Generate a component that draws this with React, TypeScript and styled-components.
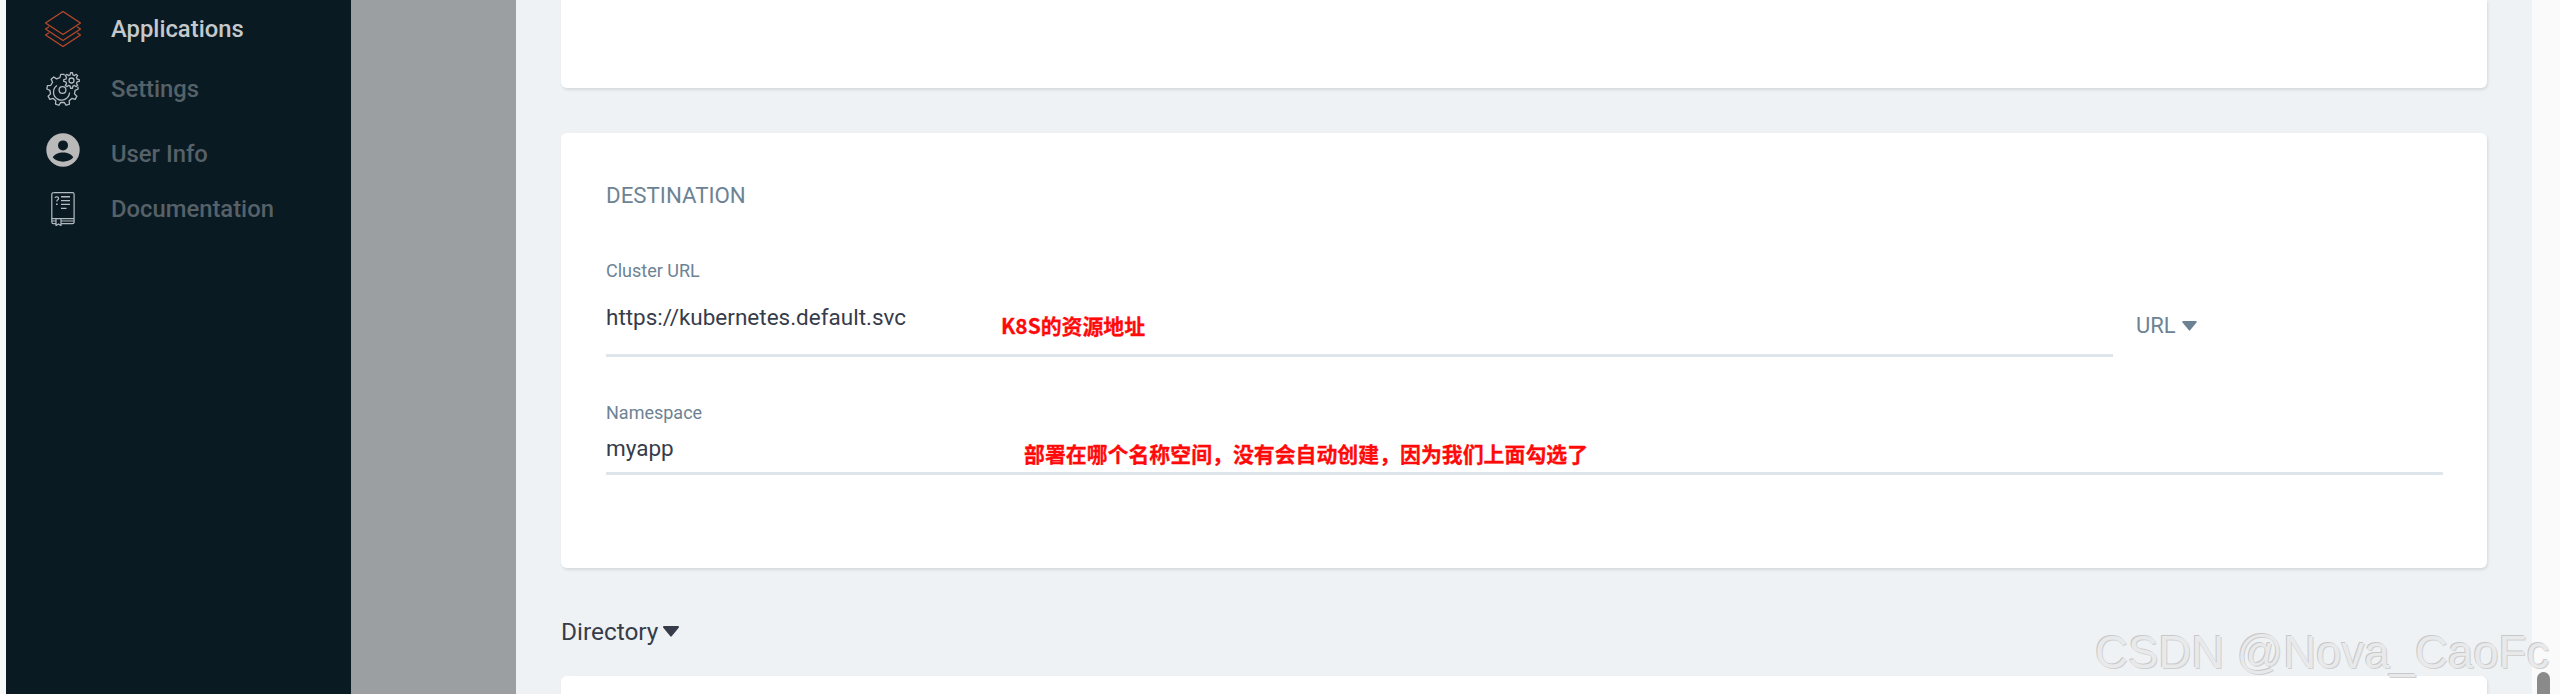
import React from "react";
import styled, { createGlobalStyle } from "styled-components";

const Global = createGlobalStyle`
  html, body { margin: 0; padding: 0; background: #f8f8f8; }
  * { box-sizing: border-box; }
`;

const Page = styled.div`
  position: relative;
  display: flex;
  width: 2560px;
  height: 694px;
  overflow: hidden;
  font-family: Roboto, "Noto Sans CJK SC", sans-serif;
  background: #f8f8f8;
`;

const LeftEdge = styled.div`
  flex: 0 0 6px;
  background: #f7f8f8;
`;

const Sidebar = styled.nav`
  flex: 0 0 345px;
  display: flex;
  flex-direction: column;
  padding-left: 39px;
  background: #0a1a23;
`;

const NavItem = styled.div<{ $height: number }>`
  display: flex;
  align-items: center;
  gap: 30px;
  height: ${(p) => p.$height}px;
`;

const NavIcon = styled.div<{ $lift?: number }>`
  flex: 0 0 36px;
  display: flex;
  align-items: center;
  justify-content: center;
  height: 36px;
  transform: translateY(${(p) => -(p.$lift ?? 0)}px);
`;

const NavLabel = styled.span<{ $active?: boolean }>`
  font-size: 23.8px;
  font-weight: 500;
  line-height: 28px;
  color: ${(p) => (p.$active ? "#c4c9cc" : "#566168")};
`;

const Backdrop = styled.div`
  flex: 0 0 165px;
  background: #9b9fa2;
`;

const Main = styled.main`
  flex: 0 0 2016px;
  display: flex;
  flex-direction: column;
  padding: 0 45px;
  overflow: hidden;
  background: #eff2f5;
`;

const Card = styled.section<{ $height: number; $mt?: number }>`
  position: relative;
  flex: 0 0 ${(p) => p.$height}px;
  margin-top: ${(p) => p.$mt ?? 0}px;
  background: #ffffff;
  border-radius: 6px;
  box-shadow: 1px 2px 3px rgba(0, 0, 0, 0.1);
`;

const TopCard = styled(Card)`
  border-radius: 0 0 6px 6px;
`;

const DestinationCard = styled(Card)`
  padding: 50px 44px 0 45px;
`;

const Title = styled.h3`
  margin: 0 0 54px;
  font-size: 22.3px;
  font-weight: 400;
  line-height: 24px;
  color: #6d8394;
`;

const FieldRow = styled.div`
  display: flex;
  align-items: flex-end;
`;

const Field = styled.div<{ $width?: number }>`
  position: relative;
  flex: ${(p) => (p.$width ? `0 0 ${p.$width}px` : "1 1 auto")};
`;

const Label = styled.div`
  font-size: 18px;
  line-height: 20px;
  color: #6d8394;
`;

const Value = styled.div<{ $top: number; $bottom: number }>`
  padding: ${(p) => p.$top}px 0 ${(p) => p.$bottom}px;
  border-bottom: 3px solid #dee6eb;
  font-size: 22.5px;
  line-height: 24px;
  color: #363c4a;
`;

const NamespaceField = styled(Field)`
  margin-top: 46px;
`;

const TypeSwitch = styled.div`
  display: flex;
  align-items: center;
  gap: 6px;
  margin: 0 0 19px 23px;
  font-size: 22px;
  line-height: 24px;
  color: #6d8394;
`;

const Caret = styled.svg`
  flex: none;
  display: block;
`;

const Note = styled.span<{ $left: number; $top: number }>`
  position: absolute;
  left: ${(p) => p.$left}px;
  top: ${(p) => p.$top}px;
  font-family: "Noto Sans CJK SC", sans-serif;
  font-size: 20.9px;
  font-weight: 700;
  line-height: 28px;
  color: #ff0a0a;
  white-space: nowrap;
  -webkit-text-stroke: 0.3px #ff0a0a;
`;

const ViewToggle = styled.div`
  flex: 0 0 108px;
  display: flex;
  align-items: center;
  gap: 5px;
  padding: 18px 0 0;
  font-size: 24.4px;
  color: #363c4a;
`;

const ScrollRail = styled.div`
  flex: 0 0 28px;
  padding: 672px 0 0 5px;
  background: #fafafa;
`;

const ScrollThumb = styled.div`
  width: 13px;
  height: 40px;
  border-radius: 7px 7px 0 0;
  background: #8a8a8a;
`;

const Watermark = styled.div`
  position: absolute;
  left: 2095px;
  top: 624px;
  font-family: "Liberation Sans", Arial, sans-serif;
  font-size: 45.6px;
  line-height: 58px;
  white-space: nowrap;
  color: #e8e9ea;
  text-shadow: -1px -1px 0 #c8c8c8, 1px 1px 0 #d0d0d0;
`;

const gearPath = (cx: number, cy: number, outer: number, inner: number, teeth: number) => {
  const pts: string[] = [];
  const step = (Math.PI * 2) / teeth;
  for (let i = 0; i < teeth; i++) {
    const a = i * step - Math.PI / 2;
    const at = (r: number, t: number) => {
      const ang = a + t * step;
      return `${(cx + r * Math.cos(ang)).toFixed(2)} ${(cy + r * Math.sin(ang)).toFixed(2)}`;
    };
    pts.push(at(inner, -0.3), at(outer, -0.16), at(outer, 0.16), at(inner, 0.3));
  }
  return `M${pts.join("L")}Z`;
};

const LayersIcon = () => (
  <svg width="36" height="36" viewBox="0 0 36 36" fill="none" stroke="#b9482a" strokeWidth="1.3" strokeLinejoin="round">
    <path d="M18 .5 35.5 12 18 23.5.5 12Z" />
    <path d="M4 15.8.5 18 18 29.5 35.5 18 32 15.8" />
    <path d="M4 21.8.5 24 18 35.5 35.5 24 32 21.8" />
  </svg>
);

const GearsIcon = () => (
  <svg width="34" height="34" viewBox="0 0 34 34" fill="none" stroke="#b4bbc0" strokeWidth="1.3" strokeLinejoin="round">
    <mask id="big-gear-cut">
      <rect width="34" height="34" fill="#fff" stroke="none" />
      <circle cx="25.5" cy="8.5" r="9" fill="#000" stroke="none" />
    </mask>
    <g mask="url(#big-gear-cut)">
      <path d={gearPath(16.5, 18, 15.7, 12.6, 9)} />
      <path d="M11 13.5a8 8 0 1 0 12.5 7" />
    </g>
    <circle cx="16.5" cy="18" r="3.4" />
    <path d={gearPath(25.5, 8.5, 7.8, 5.8, 8)} />
    <circle cx="25.5" cy="8.5" r="2.5" />
  </svg>
);

const UserIcon = () => (
  <svg width="34" height="34" viewBox="0 0 34 34">
    <circle cx="17" cy="17" r="16.7" fill="#b9b9b9" />
    <circle cx="17" cy="12.4" r="5" fill="#0a1a23" />
    <path d="M6.8 24.6c1.6-3.6 5.6-5.1 10.2-5.1s8.6 1.5 10.2 5.1c-2.3 2.8-5.9 4.1-10.2 4.1s-7.9-1.3-10.2-4.1Z" fill="#0a1a23" />
  </svg>
);

const BookIcon = () => (
  <svg width="24" height="34" viewBox="0 0 24 34" fill="none" stroke="#b4bbc0" strokeWidth="1.2" strokeLinejoin="round">
    <path d="M2.5.7h19c.8 0 1.6.8 1.6 1.6v28c0 .8-.8 1.4-1.6 1.4H10" />
    <path d="M5 31.7H2.5C1.5 31.7.8 31 .8 30V2.4C.8 1.4 1.5.7 2.5.7" />
    <path d="M.8 26.7h22.3M.9 29h4M10 29h13" />
    <path d="M5 27v6.6l2.5-1.7 2.5 1.7V27" />
    <path d="M4 6c.3-1.5 3.6-1.5 3.6.4 0 1.4-1.8 1.4-1.8 3" />
    <path d="M5.8 11.6v1.3" strokeWidth="1.6" />
    <path d="M10 4.8h9M10 8.6h9M10 12.4h9M10 16.4h5.5" strokeWidth="1.4" />
  </svg>
);

const DownCaret = ({ color, width, height }: { color: string; width: number; height: number }) => (
  <Caret width={width} height={height} viewBox="0 0 16 11">
    <path d="M1 0h14a1 1 0 0 1 .7 1.7L8.7 10.3a1 1 0 0 1-1.4 0L.3 1.7A1 1 0 0 1 1 0Z" fill={color} />
  </Caret>
);

export default function App() {
  return (
    <Page>
      <Global />
      <LeftEdge />
      <Sidebar>
        <NavItem $height={58}>
          <NavIcon><LayersIcon /></NavIcon>
          <NavLabel $active>Applications</NavLabel>
        </NavItem>
        <NavItem $height={62}>
          <NavIcon><GearsIcon /></NavIcon>
          <NavLabel>Settings</NavLabel>
        </NavItem>
        <NavItem $height={67}>
          <NavIcon $lift={4}><UserIcon /></NavIcon>
          <NavLabel>User Info</NavLabel>
        </NavItem>
        <NavItem $height={44}>
          <NavIcon><BookIcon /></NavIcon>
          <NavLabel>Documentation</NavLabel>
        </NavItem>
      </Sidebar>
      <Backdrop />
      <Main>
        <TopCard $height={88} />
        <DestinationCard $height={435} $mt={45}>
          <Title>DESTINATION</Title>
          <FieldRow>
            <Field $width={1507}>
              <Label>Cluster URL</Label>
              <Value $top={24} $bottom={25}>https://kubernetes.default.svc</Value>
              <Note $left={395} $top={50}>K8S的资源地址</Note>
            </Field>
            <TypeSwitch>
              URL
              <DownCaret color="#6d8394" width={15} height={10} />
            </TypeSwitch>
          </FieldRow>
          <NamespaceField>
            <Label>Namespace</Label>
            <Value $top={13} $bottom={12}>myapp</Value>
            <Note $left={418} $top={36}>部署在哪个名称空间，没有会自动创建，因为我们上面勾选了</Note>
          </NamespaceField>
        </DestinationCard>
        <ViewToggle>
          Directory
          <DownCaret color="#363c4a" width={16} height={11} />
        </ViewToggle>
        <Card $height={40} />
      </Main>
      <ScrollRail>
        <ScrollThumb />
      </ScrollRail>
      <Watermark>CSDN @Nova_CaoFc</Watermark>
    </Page>
  );
}
